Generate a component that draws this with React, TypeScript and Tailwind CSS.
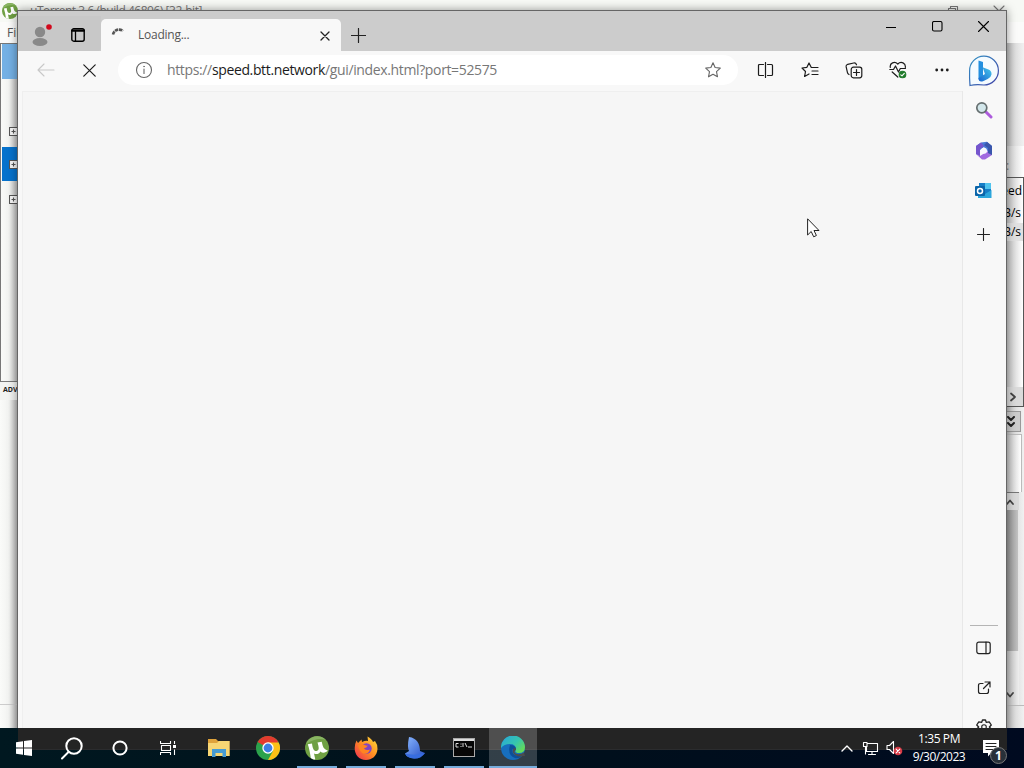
import React from 'react';

type IconProps = { w: number; h: number; children: React.ReactNode; className?: string };

function Icon({ w, h, children, className = '' }: IconProps) {
  return (
    <svg
      width={w}
      height={h}
      viewBox={`0 0 ${w} ${h}`}
      fill="none"
      stroke="currentColor"
      strokeWidth="1.1"
      strokeLinecap="round"
      strokeLinejoin="round"
      className={`block shrink-0 ${className}`}
    >
      {children}
    </svg>
  );
}

function UTorrentLogo({ size }: { size: number }) {
  return (
    <svg width={size} height={size} viewBox="0 0 24 24" className="block shrink-0">
      <circle cx="12" cy="12" r="12" fill="#6fa043" />
      <path d="M1 8A12 12 0 0 1 21 4Q12 1 1 8Z" fill="#8ab564" />
      <path
        d="M2.8 8.2L7 7.4C7.7 12.5 8.8 15.3 11.7 14.9C14.5 14.5 14 11.4 12.5 6.5L16.7 5.8C18 11 18.6 13.4 22.8 14.5C20.8 17 17.4 17.4 15.4 15.4C14 18 11.4 18.7 9 17.4L10.3 23.5C8.3 23.5 6.9 22.8 5.8 22C5.2 17 4.2 12.6 2.8 8.2Z"
        fill="#fff"
      />
    </svg>
  );
}

function Expander() {
  return (
    <Icon w={9} h={9} className="text-[#555]">
      <path d="M.5.5H8.5V8.5H.5ZM2.5 4.5H6.5M4.5 2.5V6.5" fill="#f8f8f8" strokeLinecap="butt" />
    </Icon>
  );
}

function TorrentWindow() {
  return (
    <div className="absolute inset-0 flex flex-col bg-[#fbfbfa]">
      <div className="flex h-[22px] shrink-0 items-center bg-[#f7f9f5] pl-[2px] text-[#777]">
        <UTorrentLogo size={16} />
        <span className="ml-[12px] text-[12px] leading-[22px] tracking-[-0.47px]">µTorrent 3.6 (build 46896) [32-bit]</span>
        <Icon w={12} h={12} className="ml-auto mr-[34px]">
          <path d="M1.5 3.5H8.5V10.5H1.5ZM3.5 3V1.5H10.5V8.5H9" />
        </Icon>
        <Icon w={12} h={12} className="mr-[19px]">
          <path d="M1 1L11 11M11 1L1 11" />
        </Icon>
      </div>
      <div className="h-[21px] shrink-0 pl-[7px] text-[12px] leading-[21px] text-[#555]">File</div>
      <div className="flex min-h-0 flex-1 justify-between">
        <div className="flex w-[18px] flex-col bg-linear-to-r from-[#fafbf9] via-[#f2f3f1] to-[#b8b8b8]">
          <div className="flex h-[339px] flex-col border-t border-b border-l border-[#777] pl-px">
            <div className="h-[35px] bg-[#74b0e4]" />
            <div className="mt-[48px] flex h-[9px] pl-[7px]"><Expander /></div>
            <div className="mt-[11px] flex h-[34px] items-center bg-[#0672cc] pl-[7px]"><Expander /></div>
            <div className="mt-[14px] flex h-[9px] pl-[7px]"><Expander /></div>
          </div>
          <div className="h-[18px] bg-[#f3f4f2] pl-[3px] text-[7px] leading-[16px] font-bold text-[#222]">ADV</div>
          <div className="mt-[304px] flex-1 border-t border-[#ccc]" />
        </div>
        <div className="flex w-[18px] flex-col bg-linear-to-r from-[#bbb] from-5% via-[#dedede] to-[#f1f1f1]">
          <div className="h-[103px]" />
          <div className="h-[31px] bg-linear-to-r from-[#ccc] to-[#fff] pt-[11px] text-[12px] leading-[18px] text-[#777]">:</div>
          <div className="flex h-[230px] flex-col border-y border-r border-[#555] bg-linear-to-r from-[#c0c0c0] to-[#fff] text-[12px] text-black">
            <div className="flex h-[25px] items-center justify-end pr-[1px]">eed</div>
            <div className="flex h-[20px] items-center justify-end pr-[2px]">B/s</div>
            <div className="flex h-[18px] items-center justify-end bg-[#e1e1e1] pr-[2px]">B/s</div>
            <div className="mt-auto flex h-[19px] items-center bg-[#dadada] pl-[3px] text-[#444]">
              <Icon w={8} h={10}><path d="M2 1.5L6 5L2 8.5" strokeWidth="1.8" /></Icon>
            </div>
          </div>
          <div className="mt-[4px] mr-[3px] flex h-[21px] items-center justify-start border border-[#999] bg-[#ccc] text-[#222]">
            <Icon w={8} h={12}><path d="M1 1L4 4L7 1M1 7L4 10L7 7" strokeWidth="2" /></Icon>
          </div>
          <div className="mt-[2px] mr-[2px] h-[58px] border-t border-r border-[#bbb] bg-linear-to-r from-[#bdbdbd] to-[#fff]" />
          <div className="mr-[5px] flex h-[18px] items-center border-t border-[#777] bg-[#dadada] text-[#444]">
            <Icon w={8} h={8}><path d="M1 6L4 2.5L7 6" strokeWidth="1.8" /></Icon>
          </div>
          <div className="mr-[6px] h-[141px] bg-linear-to-r from-[#909090] to-[#c2c2c2]" />
          <div className="mr-[5px] flex h-[54px] items-end bg-linear-to-r from-[#bbb] to-[#eee] pb-[6px] text-[#444]">
            <Icon w={8} h={8}><path d="M1 2L4 5.5L7 2" strokeWidth="1.8" /></Icon>
          </div>
          <div className="flex-1 border-t border-[#bbb]" />
        </div>
      </div>
    </div>
  );
}

function Cell({ className, children }: { className: string; children: React.ReactNode }) {
  return <div className={`flex shrink-0 items-center justify-center ${className}`}>{children}</div>;
}

function TabStrip() {
  return (
    <div className="flex h-[40px] bg-[#cccccc]">
      <div className="mt-[5px] flex h-[35px] w-[83px] shrink-0 rounded-br-[4px] bg-[#c8c8c8]">
        <div className="flex w-[45px] justify-center pt-[8px]">
          <svg width="22" height="24" viewBox="0 0 22 24" className="-mt-[2px] block">
            <circle cx="10" cy="10" r="5.2" fill="#898989" />
            <ellipse cx="10" cy="20" rx="7.5" ry="4" fill="#898989" />
            <circle cx="19" cy="5" r="2.8" fill="#d2081c" />
          </svg>
        </div>
        <div className="flex w-[30px] justify-center pt-[12px]">
          <Icon w={14} h={14} className="text-black">
            <rect x=".8" y=".8" width="12.4" height="12.4" rx="2" strokeWidth="1.4" />
            <path d="M1 2.8H13M4.5 3.5V13" strokeWidth="1.3" />
            <path d="M1 2.5H13" strokeWidth="2" />
          </Icon>
        </div>
      </div>
      <div className="mt-[8px] flex h-[32px] w-[240px] shrink-0 items-center rounded-t-[5px] bg-[#f8f8f8] pr-[11px] pl-[10px]">
        <Icon w={14} h={14} className="text-[#555]">
          <path d="M2 6.5A6.2 6.2 0 0 1 12 3" strokeWidth="2.6" strokeDasharray="3.4 .7" strokeLinecap="butt" />
        </Icon>
        <span className="ml-[13px] text-[12px] leading-[16px] tracking-[-0.25px] text-[#555]">Loading...</span>
        <Icon w={10} h={10} className="mt-[1px] ml-auto text-[#222]"><path d="M1 1L9 9M9 1L1 9" strokeWidth="1.3" /></Icon>
      </div>
      <Cell className="mt-[4px] h-[40px] w-[35px]">
        <Icon w={15} h={15} className="text-[#222]"><path d="M7.5.5V14.5M.5 7.5H14.5" strokeWidth="1.2" /></Icon>
      </Cell>
      <div className="ml-auto flex h-[31px] text-black">
        <Cell className="w-[46px]"><Icon w={10} h={10}><path d="M0 5.5H10" /></Icon></Cell>
        <Cell className="w-[46px]"><Icon w={11} h={11}><rect x=".5" y=".5" width="9.5" height="9.5" rx="1.5" /></Icon></Cell>
        <Cell className="w-[46px]"><Icon w={11} h={11}><path d="M.5.5L10.5 10.5M10.5.5L.5 10.5" /></Icon></Cell>
      </div>
    </div>
  );
}

function BingLogo() {
  return (
    <svg width="32" height="32" viewBox="0 0 32 32" className="block">
      <defs>
        <linearGradient id="bing-ring" x1="0" y1="0" x2="1" y2="1">
          <stop offset="0" stopColor="#3293c4" />
          <stop offset="1" stopColor="#4040a5" />
        </linearGradient>
        <linearGradient id="bing-b" x1="0" y1="1" x2="1" y2="0">
          <stop offset="0" stopColor="#1763cf" />
          <stop offset="1" stopColor="#49c9ec" />
        </linearGradient>
      </defs>
      <path d="M2 30.5C1.7 27 1.4 22 1.6 16A14.4 14.4 0 1 1 16 30Q8 29 2 30.5Z" fill="#f5fbff" stroke="url(#bing-ring)" strokeWidth="1.2" />
      <path d="M10.5 5.5L15 7.1V22L10.5 24.5Z" fill="#238fdf" />
      <path d="M10.5 23L17 19L14.6 12.2L20.5 14.6Q23.8 16 23.5 19.5Q23.2 22 19.7 24L15 26.3Q10.5 27.5 10.5 23Z" fill="url(#bing-b)" />
    </svg>
  );
}

function Toolbar() {
  return (
    <div className="flex h-[40px] shrink-0 items-center bg-[#f8f8f8] pb-[2px] text-[#1c1c1c]">
      <Cell className="w-[56px]"><Icon w={18} h={14} className="text-[#c8c8c8]"><path d="M7 1L1 7L7 13M1 7H17" /></Icon></Cell>
      <Cell className="ml-[-2px] w-[36px] pr-[1px]"><Icon w={13} h={13}><path d="M.8.8L12.2 12.2M12.2.8L.8 12.2" strokeWidth="1.2" /></Icon></Cell>
      <div className="ml-[10px] flex h-[30px] w-[620px] shrink-0 items-center rounded-full bg-white pr-[17px] pl-[17px]">
        <Icon w={18} h={18} className="text-[#666]">
          <circle cx="9" cy="9" r="7.5" />
          <path d="M9 8V12.5" />
          <circle cx="9" cy="5.5" r=".5" fill="currentColor" strokeWidth=".5" />
        </Icon>
        <span className="ml-[14px] text-[14px] leading-[20px] tracking-[-0.36px] whitespace-nowrap text-[#777]">
          https://<span className="text-[#1b1b1b]">speed.btt.network</span>/gui/index.html?port=52575
        </span>
        <Icon w={16} h={16} className="ml-auto text-[#666]">
          <path d="M8 .8L10.1 5.5L15.3 6.1L11.5 9.6L12.5 14.8L8 12.2L3.5 14.8L4.5 9.6L.7 6.1L5.9 5.5Z" />
        </Icon>
      </div>
      <div className="ml-[6px] flex">
        <Cell className="w-[44px] pr-[1px]">
          <Icon w={17} h={16}><path d="M6.5 2.5H2.5Q1.5 2.5 1.5 3.5V12.5Q1.5 13.5 2.5 13.5H6.5M10.5 2.5H14.5Q15.5 2.5 15.5 3.5V12.5Q15.5 13.5 14.5 13.5H10.5M8.5.5V15.5" strokeWidth="1.2" /></Icon>
        </Cell>
        <Cell className="w-[44px]">
          <Icon w={18} h={16}><path d="M17 5.5H10.3L8 1L5.9 5.3L1 6L4.5 9.5L3.6 14.5L8 12M11 9H17M11 12.5H17" strokeWidth="1.2" /></Icon>
        </Cell>
        <Cell className="w-[44px]">
          <Icon w={18} h={17}>
            <rect x="6.2" y="5.2" width="10.6" height="10.6" rx="2.2" strokeWidth="1.2" />
            <path d="M11.5 7.5V13.5M8.5 10.5H14.5M4 12.5Q2.6 11.8 2.4 10.4L1.1 4.7Q.8 3 2.7 2.3L8.7 1Q10.8.7 11.5 2.8" strokeWidth="1.2" />
          </Icon>
        </Cell>
        <Cell className="w-[44px]">
          <Icon w={18} h={18}>
            <path d="M1.3 6.5C.5 2 5.5-.2 8.8 3C12-.2 17 2 16.3 6.5M.8 8.5H4.5L6.5 5L9.5 11L11.3 7.5H16.5M3.2 11L8.8 16" strokeWidth="1.2" />
            <circle cx="13.5" cy="13.5" r="3.3" fill="#207b2b" stroke="#207b2b" />
            <path d="M11.8 13.8L13 14.8L15.3 12.3" stroke="#fff" />
          </Icon>
        </Cell>
        <Cell className="w-[44px]">
          <Icon w={14} h={4}><g fill="currentColor" stroke="none"><circle cx="1.7" cy="2" r="1.4" /><circle cx="7" cy="2" r="1.4" /><circle cx="12.3" cy="2" r="1.4" /></g></Icon>
        </Cell>
      </div>
      <div className="ml-[4px] pt-[1px]"><BingLogo /></div>
    </div>
  );
}

function Sidebar() {
  return (
    <div className="flex w-[44px] shrink-0 flex-col items-center border-l border-[#e8e8e8] bg-[#f8f8f8] pr-[2px] text-[#222]">
      <svg width="18" height="18" viewBox="0 0 18 18" className="mt-[10px] block shrink-0">
        <path d="M11 11L16 16" stroke="#ad5bdc" strokeWidth="3" strokeLinecap="round" />
        <circle cx="6.8" cy="6.8" r="5" fill="#d3e7eb" stroke="#666f70" strokeWidth="1.7" />
      </svg>
      <svg width="18" height="20" viewBox="0 0 18 20" className="mt-[22px] block shrink-0">
        <path d="M6 1.5L12 .8L17 5V12L11 9L9 6L5 9V15L1 13V5Z" fill="#4778d5" />
        <path d="M1 5L6 1.5L9 5L5 8V15L1 13Z" fill="#7655cd" />
        <path d="M1 13L5 15L13 10L17 12V14L10 18.5H7Z" fill="#a16be0" />
        <path d="M12 1L17 5V14L13 12V7L9 4Z" fill="#3956ac" />
        <circle cx="9" cy="9.7" r="3" fill="#f7f9ff" />
      </svg>
      <svg width="17" height="17" viewBox="0 0 17 17" className="mt-[21px] block shrink-0">
        <path d="M4 1H16V15H4Z" fill="#167dc6" />
        <path d="M10 1H16V7H10Z" fill="#50c4ee" />
        <path d="M3 10L10 12L16.5 8V16H3Z" fill="#2ba6dc" />
        <rect x="0" y="4" width="10" height="10" rx="1" fill="#0a65aa" />
        <circle cx="5" cy="9" r="2.5" fill="none" stroke="#fff" strokeWidth="1.5" />
      </svg>
      <Icon w={13} h={13} className="mt-[29px]"><path d="M6.5.5V12.5M.5 6.5H12.5" /></Icon>
      <div className="mt-[384px] h-px w-[28px] shrink-0 bg-[#b5b5b5]" />
      <Icon w={15} h={14} className="mt-[15px]"><rect x=".8" y="1.2" width="13.4" height="11.4" rx="2" strokeWidth="1.2" /><path d="M10 1.2V12.6" strokeWidth="1.2" /></Icon>
      <Icon w={14} h={14} className="mt-[26px]"><path d="M6 2.5H3.5Q1.5 2.5 1.5 4.5V10.5Q1.5 12.5 3.5 12.5H9.5Q11.5 12.5 11.5 10.5V8M8 1H13V6M13 1L6.5 7.5" strokeWidth="1.2" /></Icon>
      <Icon w={16} h={16} className="mt-[24px]">
        <path d="M6.5 1H9.5L10.2 3.3L13.2 2.8L15.3 6L13.4 8L15 9.7L13 13L10.4 12.5L9.5 15H6.5L5.7 12.5L3 13L1 9.7L2.7 8L.7 6L2.8 2.8L5.7 3.3Z" strokeWidth="1.3" />
        <circle cx="8" cy="8" r="2.3" />
      </Icon>
    </div>
  );
}

function BrowserWindow() {
  return (
    <div className="absolute top-[10px] left-[17px] flex h-[740px] w-[990px] flex-col overflow-hidden border border-[#666] bg-[#f8f8f8] shadow-[0_0_9px_rgba(0,0,0,0.4)]">
      <TabStrip />
      <Toolbar />
      <div className="flex min-h-0 flex-1">
        <div className="ml-[4px] flex-1 border-t border-l border-[#efefef] bg-[#f6f6f6]" />
        <Sidebar />
      </div>
    </div>
  );
}

function TaskApp({ children, active = false, running = false }: { children: React.ReactNode; active?: boolean; running?: boolean }) {
  return (
    <div className={`flex h-[40px] shrink-0 flex-col items-center ${active ? 'ml-[1px] w-[48px] bg-white/20' : 'w-[49px]'}`}>
      <div className="flex h-[38px] items-center justify-center pt-[1px]">{children}</div>
      {running && <div className={`h-[2px] bg-[#76acdc] ${active ? 'w-[48px]' : 'w-[40px]'}`} />}
    </div>
  );
}

function Taskbar() {
  return (
    <div className="absolute inset-x-0 bottom-0 h-[40px] bg-linear-to-r from-[#001820] via-[#00101b] to-[#000a20]">
      <div className="absolute top-0 left-[18px] h-[22px] w-[989px] border-b border-[#2b2c2e] bg-[#242424]" />
      <div className="relative flex h-[40px] text-white">
        <Cell className="w-[48px]">
          <svg width="16" height="16" viewBox="0 0 16 16" fill="#fff"><path d="M0 2.2L7 1.2V7.5H0ZM8 1L16 0V7.5H8ZM0 8.5H7V14.8L0 13.8ZM8 8.5H16V16L8 15Z" /></svg>
        </Cell>
        <Cell className="w-[48px]">
          <Icon w={22} h={23}><circle cx="13" cy="9" r="7.7" strokeWidth="2" /><path d="M7.5 15L1 21.5" strokeWidth="2" /></Icon>
        </Cell>
        <Cell className="w-[48px]">
          <Icon w={16} h={16}><circle cx="8" cy="8" r="6.6" strokeWidth="2" /></Icon>
        </Cell>
        <Cell className="w-[48px]">
          <Icon w={16} h={16}>
            <path d="M.5 1V3.5H10.5V1M.5 15V12.5H10.5V15M1.5 5.5H10.5V10.5H1.5ZM14.5 1V4M14.5 9.5V15" strokeLinecap="butt" />
            <rect x="13" y="5" width="3" height="3" fill="currentColor" stroke="none" />
          </Icon>
        </Cell>
        <div className="ml-[2px] flex">
          <TaskApp>
            <svg width="22" height="18" viewBox="0 0 22 18"><path d="M0 0H8L10 2H21.5V17H0Z" fill="#dfa33b" /><path d="M0 4H9L11 2H21.5V17H0Z" fill="#f7d674" /><path d="M4 10H18V18H14.5V14H7.5V18H4Z" fill="#469bd3" /></svg>
          </TaskApp>
          <TaskApp>
            <svg width="24" height="24" viewBox="0 0 24 24">
              <circle cx="12" cy="12" r="12" fill="#2ba24c" />
              <path d="M12 12L1.6 6A12 12 0 0 1 22.4 6Z" fill="#e33b2e" />
              <path d="M12 6.5H22.7A12 12 0 0 1 12 24L17 15Z" fill="#fbc116" />
              <circle cx="12" cy="12" r="5.7" fill="#fff" /><circle cx="12" cy="12" r="4.4" fill="#3c7fe5" />
            </svg>
          </TaskApp>
          <TaskApp running><UTorrentLogo size={24} /></TaskApp>
          <TaskApp running>
            <svg width="24" height="24" viewBox="0 0 24 24">
              <defs><linearGradient id="fox" x1="1" y1="0" x2="0" y2="1"><stop offset="0" stopColor="#ffe23b" /><stop offset=".5" stopColor="#ff8b22" /><stop offset="1" stopColor="#ed2757" /></linearGradient></defs>
              <path d="M2.5 4.5L4 7L7.5 3.5L8 6Q12 4 14 5L13.5.5Q18 3 19 6L21 5Q24 9 23.5 13C23 20 18 24 12 24C5 24 .5 18.5.7 12Q.7 8 2.5 4.5Z" fill="url(#fox)" />
              <circle cx="12.5" cy="12.5" r="5.2" fill="#8144c1" />
              <path d="M4 9L9.5 8.5Q12 10 14 9.5Q12.5 12 10 12.2Q11 15 16 13.5Q14 19 9 17.5Q5 15 4 9Z" fill="#ff8421" />
            </svg>
          </TaskApp>
          <TaskApp running>
            <svg width="22" height="22" viewBox="0 0 22 22">
              <defs><linearGradient id="fin" x1="0" y1="0" x2="1" y2="1"><stop offset="0" stopColor="#8bb8ff" /><stop offset="1" stopColor="#244ec5" /></linearGradient></defs>
              <path d="M5 0C13 1 16 7 16 14L21 16Q17 22 10 21.5Q3 21 1 16.5L5 14Q3 10 5 0Z" fill="url(#fin)" />
              <path d="M1 16.5Q10 19 21 16Q16 22 10 21.5Q3 21 1 16.5Z" fill="#376de0" />
            </svg>
          </TaskApp>
          <TaskApp running>
            <svg width="22" height="19" viewBox="0 0 22 19"><rect x=".5" y=".5" width="21" height="18" fill="#070707" stroke="#aaa" /><path d="M1 2H21" stroke="#ddd" strokeWidth="2" /><path d="M5.5 5.5H3V9H5.5M8 5.5V6.5M8 8V9M10 5V9M12 5L14 9M15 9H19" fill="none" stroke="#ddd" /></svg>
          </TaskApp>
          <TaskApp active running>
            <svg width="24" height="24" viewBox="0 0 24 24">
              <defs><linearGradient id="wave" x1="0" y1="0" x2="1" y2=".7"><stop offset="0" stopColor="#27a5dd" /><stop offset=".6" stopColor="#36c5ae" /><stop offset="1" stopColor="#65dc58" /></linearGradient></defs>
              <circle cx="12" cy="12" r="12" fill="#176ebd" />
              <path d="M0 12A12 12 0 0 1 24 11Q24 17 18 17Q13 17 15 13.5Q15 8 9 8Q3 8 0 12Z" fill="url(#wave)" />
              <path d="M9 9Q6 19 14 22Q18 23 21.5 19.5Q10 21 11.5 13L15 13.5Q15 9 9 9Z" fill="#0d4f98" />
              <path d="M15 13.5Q11 17.5 17.5 18.2Q20 18.3 23 16.5L24 20L22 20Q17 21.5 13.5 18.5Q10.5 16 12.5 12.5Q15 11 15 13.5Z" fill="#4b4c4d" />
            </svg>
          </TaskApp>
        </div>
        <div className="ml-auto flex">
          <Cell className="w-[24px]"><Icon w={12} h={7}><path d="M1 6L6 1L11 6" strokeWidth="1.4" /></Icon></Cell>
          <Cell className="w-[24px] pr-[1px]"><Icon w={17} h={15}><path d="M5 2.5H15.5V10.5H4.5V6M10 11V13.5M6.5 13.5H13.5M1.5 1.5H5V5.5H1.5ZM3.5 5.5V13" /></Icon></Cell>
          <Cell className="w-[24px] pr-[1px]">
            <Icon w={17} h={16}><path d="M1 5.5H3.5L7.5 1.5V13.5L3.5 9.5H1Z" /><circle cx="12" cy="11" r="4.3" fill="#d73945" stroke="none" /><path d="M10.2 9.2L13.8 12.8M13.8 9.2L10.2 12.8" /></Icon>
          </Cell>
          <div className="flex w-[64px] flex-col items-center pt-[2px] text-[12px] leading-[18px] whitespace-nowrap">
            <span className="tracking-[-0.4px]">1:35 PM</span>
            <span className="tracking-[-0.5px]">9/30/2023</span>
          </div>
          <div className="w-[53px] pt-[12px] pl-[12px]">
            <div className="relative h-[25px] w-[25px]">
              <Icon w={17} h={17}><path d="M0 0H16V13H8L5 16.5V13H0Z" fill="#fff" stroke="none" /><path d="M3 3.5H13M3 6.5H13M3 9.5H10" stroke="#242424" /></Icon>
              <span className="absolute top-[7px] left-[7px] flex h-[17px] w-[17px] items-center justify-center rounded-full border border-[#777] bg-[#283039] text-[12px] font-bold">1</span>
            </div>
          </div>
        </div>
      </div>
    </div>
  );
}

export default function App() {
  return (
    <div className="relative h-[768px] w-[1024px] overflow-hidden bg-[#f6f6f6] font-['Open_Sans','Noto_Sans',sans-serif]">
      <TorrentWindow />
      <BrowserWindow />
      <svg width="13" height="20" viewBox="0 0 13 20" className="absolute top-[218px] left-[807px] block">
        <path d="M.6.8V17L4.2 13.5L6.7 18.8L9.4 17.5L7 12.5H12Z" fill="#fff" stroke="#222" strokeWidth="1" />
      </svg>
      <Taskbar />
    </div>
  );
}
